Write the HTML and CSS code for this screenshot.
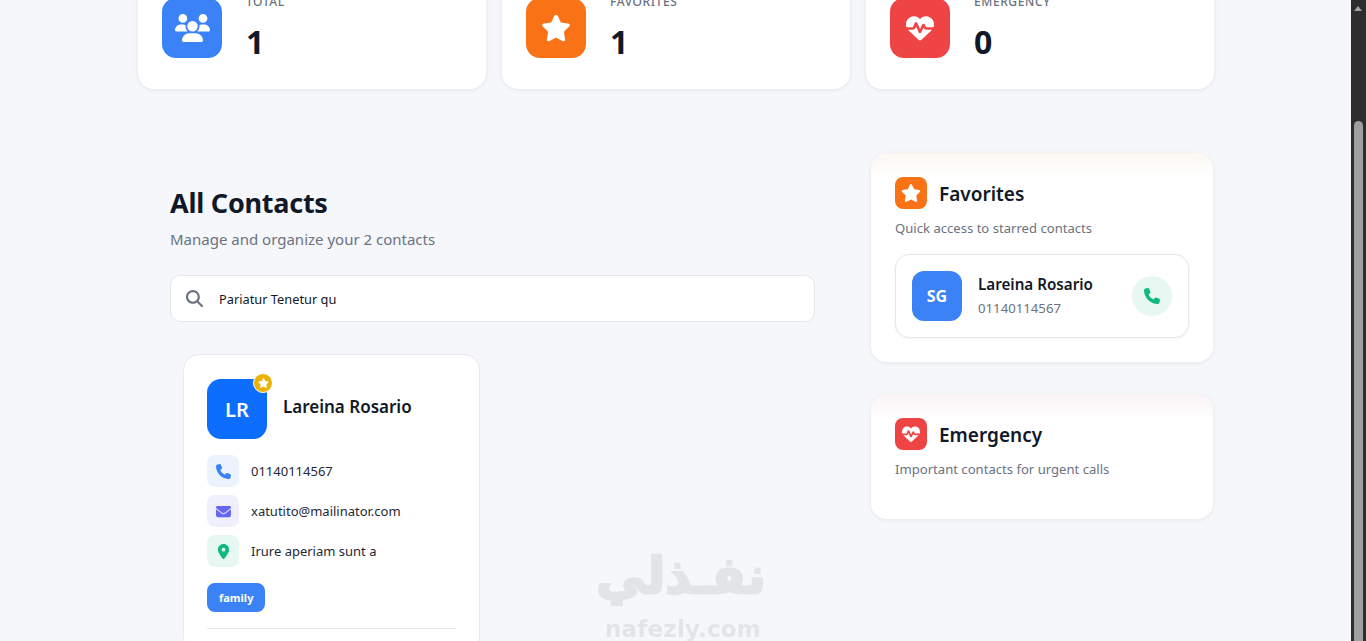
FILE: index.html
```html
<!DOCTYPE html>
<html lang="en">
<head>
    <meta charset="UTF-8">
    <meta name="viewport" content="width=device-width, initial-scale=1.0">
    <title>Contacts</title>
    <link rel="stylesheet" href="styles.css">
</head>
<body>
    <svg class="icon-defs" aria-hidden="true">
        <symbol id="i-users" viewBox="0 0 640 512"><path d="M144 0a80 80 0 1 1 0 160A80 80 0 1 1 144 0zM512 0a80 80 0 1 1 0 160A80 80 0 1 1 512 0zM0 298.7C0 239.8 47.8 192 106.7 192h42.7c15.9 0 31 3.5 44.6 9.7c-1.3 7.2-1.9 14.7-1.9 22.3c0 38.2 16.8 72.5 43.3 96c-.2 0-.4 0-.7 0H21.3C9.6 320 0 310.4 0 298.7zM405.3 320c-.2 0-.4 0-.7 0c26.6-23.5 43.3-57.8 43.3-96c0-7.6-.7-15-1.9-22.3c13.6-6.3 28.7-9.7 44.6-9.7h42.7C592.2 192 640 239.8 640 298.7c0 11.8-9.6 21.3-21.3 21.3H405.3zM224 224a96 96 0 1 1 192 0 96 96 0 1 1 -192 0zM128 485.3C128 411.7 187.7 352 261.3 352H378.7C452.3 352 512 411.7 512 485.3c0 14.7-11.9 26.7-26.7 26.7H154.7c-14.7 0-26.7-11.9-26.7-26.7z"/></symbol>
        <symbol id="i-star" viewBox="0 0 576 512"><path d="M316.9 18C311.6 7 300.4 0 288.1 0s-23.4 7-28.8 18L195 150.3 51.4 171.5c-12 1.8-22 10.2-25.7 21.7s-.7 24.2 7.9 32.7L137.8 329 113.2 474.7c-2 12 3 24.2 12.9 31.3s23 8 33.8 2.3l128.3-68.5 128.3 68.5c10.8 5.7 23.9 4.9 33.8-2.3s14.9-19.3 12.9-31.3L438.5 329 542.7 225.9c8.6-8.5 11.7-21.2 7.9-32.7s-13.7-19.9-25.7-21.7L381.2 150.3 316.9 18z"/></symbol>
        <symbol id="i-heart" viewBox="0 0 512 512"><path d="M228.3 469.1L47.6 300.4c-4.2-3.9-8.2-8.1-11.9-12.4h87c22.6 0 43-13.6 51.7-34.5l10.5-25.2 49.3 109.5c3.8 8.5 12.1 14 21.4 14.1s17.8-5 22-13.3L320 253.7l1.7 3.4c9.5 19 28.9 31 50.1 31H476.3c-3.7 4.3-7.7 8.5-11.9 12.4L283.7 469.1c-7.5 7-17.4 10.9-27.7 10.9s-20.2-3.9-27.7-10.9zM503.7 240h-132c-3 0-5.8-1.7-7.2-4.4l-23.2-46.3c-4.1-8.1-12.4-13.3-21.5-13.3s-17.4 5.1-21.5 13.3l-41.4 82.8L205.9 158.2c-3.9-8.7-12.7-14.3-22.2-14.1s-18.1 5.9-21.8 14.8l-31.8 76.3c-1.2 3-4.2 4.9-7.4 4.9H16c-2.6 0-5 .4-7.3 1.1C3 225.2 0 208.2 0 190.9v-5.8c0-69.9 50.5-129.5 119.4-141C165 36.5 211.4 51.4 244 84l12 12 12-12c32.6-32.6 79-47.5 124.6-39.9C461.5 55.6 512 115.2 512 185.1v5.8c0 16.9-2.8 33.5-8.3 49.1z"/></symbol>
        <symbol id="i-phone" viewBox="0 0 512 512"><path d="M164.9 24.6c-7.7-18.6-28-28.5-47.4-23.2l-88 24C12.1 30.2 0 46 0 64C0 311.4 200.6 512 448 512c18 0 33.8-12.1 38.6-29.5l24-88c5.3-19.4-4.6-39.7-23.2-47.4l-96-40c-16.3-6.8-35.2-2.1-46.3 11.6L304.7 368C234.3 334.7 177.3 277.7 144 207.3L193.3 167c13.7-11.2 18.4-30 11.6-46.3l-40-96z"/></symbol>
        <symbol id="i-mail" viewBox="0 0 512 512"><path d="M48 64C21.5 64 0 85.5 0 112c0 15.1 7.1 29.3 19.2 38.4L236.8 313.6c11.4 8.5 27 8.5 38.4 0L492.8 150.4c12.1-9.1 19.2-23.3 19.2-38.4c0-26.5-21.5-48-48-48H48zM0 176V384c0 35.3 28.7 64 64 64H448c35.3 0 64-28.7 64-64V176L294.4 339.2c-22.8 17.1-54 17.1-76.8 0L0 176z"/></symbol>
        <symbol id="i-pin" viewBox="0 0 384 512"><path d="M215.7 499.2C267 435 384 279.4 384 192C384 86 298 0 192 0S0 86 0 192c0 87.4 117 243 168.3 307.2c12.3 15.3 35.1 15.3 47.4 0zM192 128a64 64 0 1 1 0 128 64 64 0 1 1 0-128z"/></symbol>
        <symbol id="i-search" viewBox="0 0 512 512"><path d="M416 208c0 45.9-14.9 88.3-40 122.7L502.6 457.4c12.5 12.5 12.5 32.8 0 45.3s-32.8 12.5-45.3 0L330.7 376c-34.4 25.2-76.8 40-122.7 40C93.1 416 0 322.9 0 208S93.1 0 208 0S416 93.1 416 208zM208 352a144 144 0 1 0 0-288 144 144 0 1 0 0 288z"/></symbol>
    </svg>

    <div class="window">
        <div class="page">
            <div class="stats">
                <div class="stat-card">
                    <div class="stat-icon blue"><svg class="stat-users"><use href="#i-users"/></svg></div>
                    <div>
                        <p class="stat-label">TOTAL</p>
                        <p class="stat-value">1</p>
                    </div>
                </div>
                <div class="stat-card">
                    <div class="stat-icon orange"><svg class="stat-glyph"><use href="#i-star"/></svg></div>
                    <div>
                        <p class="stat-label">FAVORITES</p>
                        <p class="stat-value">1</p>
                    </div>
                </div>
                <div class="stat-card">
                    <div class="stat-icon red"><svg class="stat-glyph"><use href="#i-heart"/></svg></div>
                    <div>
                        <p class="stat-label">EMERGENCY</p>
                        <p class="stat-value">0</p>
                    </div>
                </div>
            </div>

            <div class="content">
                <section class="contacts">
                    <h2 class="contacts-title">All Contacts</h2>
                    <p class="contacts-sub">Manage and organize your 2 contacts</p>
                    <div class="search">
                        <svg class="search-icon"><use href="#i-search"/></svg>
                        <span>Pariatur Tenetur qu</span>
                    </div>
                    <article class="contact-card">
                        <div class="contact-head">
                            <div class="avatar">LR
                                <span class="avatar-star"><svg><use href="#i-star"/></svg></span>
                            </div>
                            <h3 class="contact-name">Lareina Rosario</h3>
                        </div>
                        <div class="contact-row">
                            <span class="row-icon tint-blue"><svg><use href="#i-phone"/></svg></span>
                            <span>01140114567</span>
                        </div>
                        <div class="contact-row">
                            <span class="row-icon tint-purple"><svg><use href="#i-mail"/></svg></span>
                            <span>xatutito@mailinator.com</span>
                        </div>
                        <div class="contact-row">
                            <span class="row-icon tint-green"><svg><use href="#i-pin"/></svg></span>
                            <span>Irure aperiam sunt a</span>
                        </div>
                        <span class="tag">family</span>
                        <hr class="divider">
                    </article>
                </section>

                <aside class="side">
                    <section class="side-card side-fav">
                        <div class="side-head">
                            <span class="side-icon orange"><svg><use href="#i-star"/></svg></span>
                            <h3>Favorites</h3>
                        </div>
                        <p class="side-sub">Quick access to starred contacts</p>
                        <div class="mini-card">
                            <div class="mini-avatar">SG</div>
                            <div class="mini-info">
                                <div class="mini-name">Lareina Rosario</div>
                                <div class="mini-phone">01140114567</div>
                            </div>
                            <span class="call-btn"><svg><use href="#i-phone"/></svg></span>
                        </div>
                    </section>
                    <section class="side-card side-emg">
                        <div class="side-head">
                            <span class="side-icon red"><svg><use href="#i-heart"/></svg></span>
                            <h3>Emergency</h3>
                        </div>
                        <p class="side-sub">Important contacts for urgent calls</p>
                    </section>
                </aside>
            </div>
        </div>

        <div class="scrollbar">
            <span class="scroll-arrow"></span>
            <span class="scroll-thumb"></span>
        </div>

        <div class="watermark">
            <div class="wm-ar" lang="ar" dir="rtl">نفـذلي</div>
            <div class="wm-en">nafezly.com</div>
        </div>
    </div>
</body>
</html>
```

FILE: styles.css
```css
* {
    box-sizing: border-box;
}
body {
    margin: 0;
    background: #f5f7fb;
    color: #111827;
    font-family: "Noto Sans", "Liberation Sans", sans-serif;
}
h2, h3, p {
    margin: 0;
}
svg {
    display: block;
    fill: currentColor;
}
.icon-defs {
    display: none;
}
.window {
    position: relative;
    display: flex;
    height: 641px;
    overflow: hidden;
}
.page {
    flex: 1;
    min-width: 0;
    padding-left: 138px;
}

/* stats row, scrolled partly out of view */
.stats {
    display: flex;
    align-items: flex-end;
    gap: 16px;
    width: 1076px;
    height: 89px;
}
.stat-card {
    display: flex;
    flex: 1;
    gap: 24px;
    flex-shrink: 0;
    height: 120px;
    padding: 29px 24px;
    background: #fff;
    border-radius: 16px;
    box-shadow: 0 1px 4px rgba(17, 24, 39, 0.08);
}
.stat-icon {
    display: flex;
    align-items: center;
    justify-content: center;
    flex: 0 0 60px;
    height: 60px;
    color: #fff;
    border-radius: 14px;
}
.blue { background: #3b82f6; }
.orange { background: #f97316; }
.red { background: #ef4444; }
.stat-users {
    width: 35px;
    height: 28px;
}
.stat-glyph {
    width: 30px;
    height: 28px;
}
.stat-label {
    margin-top: -4px;
    font-size: 12px;
    font-weight: 500;
    letter-spacing: 0.6px;
    line-height: 16px;
    color: #6b7280;
}
.stat-value {
    margin-top: 10px;
    font-size: 32px;
    font-weight: 700;
    line-height: 44px;
}

.content {
    display: grid;
    grid-template-columns: 709px 342px;
    gap: 24px;
    align-items: start;
    padding-top: 64px;
}

/* left column */
.contacts {
    padding: 31px 32px 0;
}
.contacts-title {
    font-size: 27px;
    font-weight: 700;
    letter-spacing: -0.25px;
    line-height: 38px;
}
.contacts-sub {
    margin-top: 6px;
    font-size: 15px;
    line-height: 22px;
    color: #6b7280;
}
.search {
    display: flex;
    align-items: center;
    gap: 16px;
    height: 47px;
    margin-top: 25px;
    padding: 0 15px;
    background: #fff;
    border: 1px solid #e5e7eb;
    border-radius: 10px;
    font-size: 12.8px;
}
.search-icon {
    width: 17px;
    height: 17px;
    color: #6b7280;
}
.contact-card {
    width: 297px;
    margin: 32px 0 0 13px;
    padding: 24px 23px;
    background: #fff;
    border: 1px solid #e8eaee;
    border-radius: 16px;
}
.contact-head {
    display: flex;
    align-items: center;
    gap: 16px;
    margin-bottom: 16px;
}
.avatar {
    position: relative;
    display: flex;
    align-items: center;
    justify-content: center;
    flex: 0 0 60px;
    height: 60px;
    color: #fff;
    background: #0d6efd;
    border-radius: 14px;
    font-size: 20px;
    font-weight: 600;
}
.avatar-star {
    position: absolute;
    top: -6px;
    right: -6px;
    display: flex;
    align-items: center;
    justify-content: center;
    width: 20px;
    height: 20px;
    color: #fff;
    background: #eab308;
    border: 1px solid #fff;
    border-radius: 50%;
}
.avatar-star svg {
    width: 11px;
    height: 10px;
}
.contact-name {
    margin-top: -6px;
    font-size: 17px;
    font-weight: 600;
}
.contact-row {
    display: flex;
    align-items: center;
    gap: 12px;
    margin-bottom: 8px;
    font-size: 13px;
    color: #1f2937;
}
.row-icon {
    display: flex;
    align-items: center;
    justify-content: center;
    width: 32px;
    height: 32px;
    border-radius: 8px;
}
.row-icon svg {
    width: 15px;
    height: 15px;
}
.tint-blue { background: #ecf3fe; color: #3b82f6; }
.tint-purple { background: #f0effd; color: #6366f1; }
.tint-green { background: #e7f8f2; color: #10b981; }
.tag {
    display: inline-block;
    margin-top: 8px;
    padding: 0 12px;
    font-size: 11px;
    font-weight: 700;
    line-height: 29px;
    color: #fff;
    background: #3b82f6;
    border-radius: 8px;
}
.divider {
    margin: 16px 0 0;
    border: 0;
    border-top: 1px solid #e5e7eb;
}

/* right column */
.side {
    display: flex;
    flex-direction: column;
    gap: 32px;
}
.side-card {
    padding: 24px;
    background: #fff;
    border-radius: 16px;
    box-shadow: 0 1px 4px rgba(17, 24, 39, 0.08);
}
.side-fav {
    background: linear-gradient(#faf7f2, #fff 26px);
}
.side-emg {
    height: 125px;
    background: linear-gradient(#faf3f6, #fff 26px);
}
.side-head {
    display: flex;
    align-items: center;
    gap: 12px;
}
.side-head h3 {
    margin-top: 2px;
    font-size: 19px;
    font-weight: 600;
}
.side-icon {
    display: flex;
    align-items: center;
    justify-content: center;
    width: 32px;
    height: 32px;
    color: #fff;
    border-radius: 8px;
}
.side-icon svg {
    width: 20px;
    height: 18px;
}
.side-sub {
    margin-top: 9px;
    font-size: 13.1px;
    line-height: 20px;
    color: #6b7280;
}
.mini-card {
    display: flex;
    align-items: center;
    gap: 16px;
    height: 84px;
    margin-top: 16px;
    padding: 0 16px;
    background: #fff;
    border: 1px solid #e5e7eb;
    border-radius: 14px;
    box-shadow: 0 1px 3px rgba(17, 24, 39, 0.05);
}
.mini-avatar {
    display: flex;
    align-items: center;
    justify-content: center;
    flex: 0 0 50px;
    height: 50px;
    color: #fff;
    background: #3b82f6;
    border-radius: 12px;
    font-size: 16px;
    font-weight: 700;
}
.mini-info {
    flex: 1;
}
.mini-name {
    font-size: 15.2px;
    font-weight: 600;
    line-height: 18px;
}
.mini-phone {
    margin-top: 6px;
    font-size: 13.2px;
    line-height: 18px;
    color: #6b7280;
}
.call-btn {
    display: flex;
    align-items: center;
    justify-content: center;
    flex: 0 0 40px;
    height: 40px;
    color: #10b981;
    background: #e7f8f2;
    border-radius: 50%;
}
.call-btn svg {
    width: 16px;
    height: 16px;
}

/* fake browser scrollbar */
.scrollbar {
    position: relative;
    flex: 0 0 15px;
    background: #2d2d2d;
}
.scroll-arrow {
    position: absolute;
    top: 6px;
    left: 3px;
    border: 4.5px solid transparent;
    border-top: 0;
    border-bottom: 5px solid #a3a3a3;
}
.scroll-thumb {
    position: absolute;
    top: 121px;
    bottom: 0;
    left: 3px;
    width: 9px;
    background: #9f9f9f;
    border-radius: 4.5px 4.5px 0 0;
}

/* site watermark over the page */
.watermark {
    position: absolute;
    left: 600px;
    top: 543px;
    width: 166px;
    text-align: center;
    color: #dfe0e2;
    opacity: 0.8;
    filter: blur(0.6px);
    pointer-events: none;
}
.wm-ar {
    font-family: "DejaVu Sans", sans-serif;
    font-size: 50px;
    font-weight: 700;
    line-height: 66px;
    -webkit-text-stroke: 2.5px #dfe0e2;
}
.wm-en {
    margin-top: 7px;
    font-family: "DejaVu Sans", sans-serif;
    font-size: 23px;
    font-weight: 700;
    line-height: 26px;
    letter-spacing: 0.2px;
}
```
